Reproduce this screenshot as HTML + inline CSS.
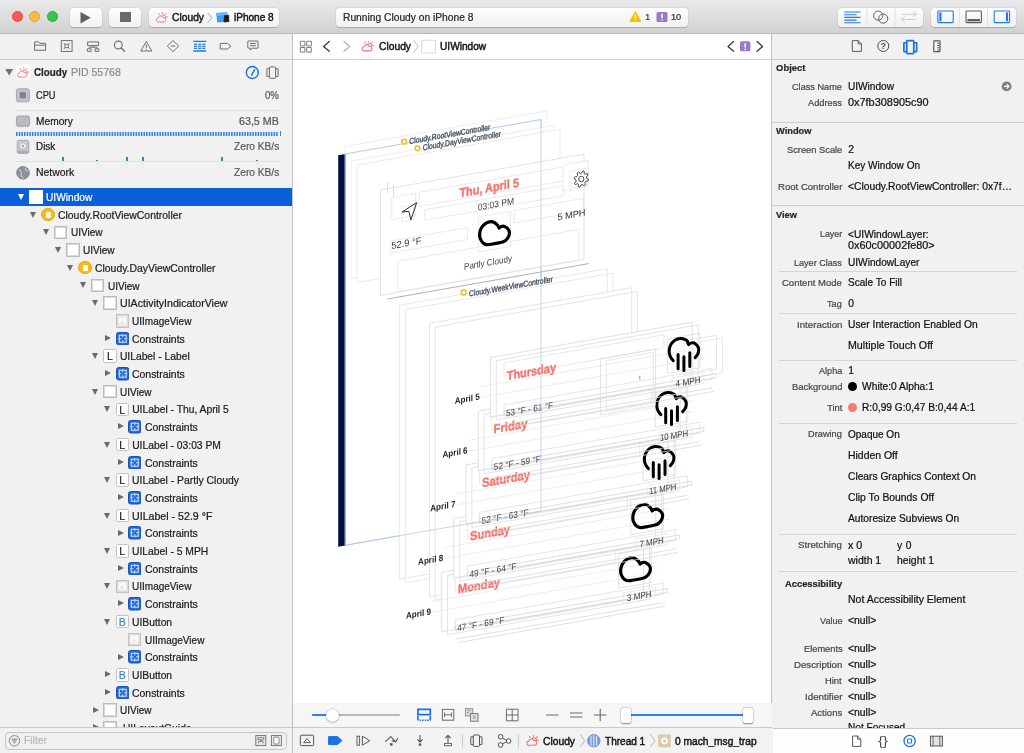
<!DOCTYPE html>
<html lang="en"><head><meta charset="utf-8"><title>Cloudy — Xcode View Debugger</title>
<style>
*{box-sizing:border-box;margin:0;padding:0}
html,body{width:1024px;height:753px;overflow:hidden;background:#fff}
body{font-family:"Liberation Sans",sans-serif;font-size:11.5px;color:#1e1e1e;position:relative;-webkit-font-smoothing:antialiased}
.abs{position:absolute}
#wrap{position:absolute;left:0;top:0;width:1024px;height:753px;will-change:transform}
#toolbar{left:0;top:0;width:1024px;height:34px;background:linear-gradient(#e9e9e9,#d2d2d2);border-bottom:1px solid #b9b9b9}
.tl{position:absolute;top:11.2px;width:11.2px;height:11.2px;border-radius:50%}
.btn{position:absolute;top:7.5px;height:19px;border-radius:4px;background:linear-gradient(#fdfdfd,#f1f1f1);box-shadow:0 0.5px 1px rgba(0,0,0,.2),0 0 0 0.5px rgba(0,0,0,.05)}
.t{position:absolute;white-space:nowrap;line-height:1;-webkit-text-stroke:0.22px currentColor}
#left{left:0;top:34px;width:292px;height:719px;background:#f1f1f1}
#leftborder{left:291.8px;top:34px;width:1.3px;height:719px;background:#c0c0c0}
#center{left:293px;top:34px;width:479px;height:719px;background:#fff}
#right{left:772px;top:34px;width:252px;height:719px;background:#f1f1f1}
#rightborder{left:771.2px;top:34px;width:1.3px;height:719px;background:#c0c0c0}
.hline{position:absolute;height:1px;background:#d4d4d4}
.tri{position:absolute;width:0;height:0}
.ico{position:absolute;width:13.5px;height:13.5px}
</style></head>
<body><div id="wrap">
<div id="left" class="abs"></div><div id="center" class="abs"></div><div id="right" class="abs"></div>
<div id="leftborder" class="abs"></div><div id="rightborder" class="abs"></div>
<div id="toolbar" class="abs">
<div class="tl" style="left:11.5px;background:#fc5b57;border:0.5px solid #df4744"></div>
<div class="tl" style="left:29.1px;background:#fdbc40;border:0.5px solid #dea035"></div>
<div class="tl" style="left:46.7px;background:#34c84a;border:0.5px solid #27aa35"></div>
<div class="btn" style="left:70px;width:32px"><svg class="abs" style="left:10px;top:4px" width="12" height="12" viewBox="0 0 12 12"><path d="M0.5 0 L10.8 5.8 L0.5 11.6Z" fill="#606060"/></svg></div>
<div class="btn" style="left:109px;width:32px"><div class="abs" style="left:11.3px;top:4.5px;width:10.4px;height:10.4px;background:#6a6a6a"></div></div>
<div class="btn" style="left:149.2px;width:129.4px"></div>
<div class="btn" style="left:336px;width:352px"></div>
<div class="btn" style="left:838px;width:85px"></div>
<div class="btn" style="left:931px;width:85px"></div>
<div class="t" style="left:172.1px;top:13px;font-size:10.3px;transform:scaleX(0.9980);transform-origin:0 0;-webkit-text-stroke:0.45px currentColor;color:#161616">Cloudy</div>
<div class="t" style="left:233.6px;top:13px;font-size:10.3px;transform:scaleX(0.9763);transform-origin:0 0;-webkit-text-stroke:0.45px currentColor;color:#161616">iPhone 8</div>
<div class="t" style="left:343.0px;top:13px;font-size:10.3px;transform:scaleX(0.9951);transform-origin:0 0;color:#262626">Running Cloudy on iPhone 8</div>
<div class="t" style="left:645.3px;top:13px;font-size:8.8px;color:#333">1</div>
<div class="t" style="left:671.3px;top:13px;font-size:8.8px;transform:scaleX(1.0420);transform-origin:0 0;color:#333">10</div>
</div>
<div class="hline" style="left:0;top:58.8px;width:292px;height:1.3px;background:#c9c9c9"></div>
<div class="hline" style="left:293px;top:58.8px;width:479px;height:1.3px;background:#cfcfcf"></div>
<div class="hline" style="left:772px;top:58.8px;width:252px;height:1.3px;background:#c9c9c9"></div>
<div class="t" style="left:378.5px;top:42px;font-size:10.3px;transform:scaleX(0.9980);transform-origin:0 0;-webkit-text-stroke:0.45px currentColor;color:#161616">Cloudy</div>
<div class="t" style="left:439.8px;top:42px;font-size:10.3px;transform:scaleX(0.9844);transform-origin:0 0;-webkit-text-stroke:0.45px currentColor;color:#161616">UIWindow</div>
<div class="t" style="left:33.5px;top:68px;font-size:10.3px;transform:scaleX(0.9512);transform-origin:0 0;font-weight:bold;color:#262626">Cloudy</div>
<div class="t" style="left:71.1px;top:68px;font-size:10.3px;transform:scaleX(1.0231);transform-origin:0 0;color:#8c8c8c">PID 55768</div>
<div class="t" style="left:35.9px;top:91px;font-size:10.3px;transform:scaleX(0.8967);transform-origin:0 0;color:#1a1a1a">CPU</div>
<div class="t" style="left:265.1px;top:91px;font-size:10.3px;transform:scaleX(0.9337);transform-origin:0 0;color:#585858">0%</div>
<div class="t" style="left:35.9px;top:117px;font-size:10.3px;transform:scaleX(0.9893);transform-origin:0 0;color:#1a1a1a">Memory</div>
<div class="t" style="left:239.2px;top:117px;font-size:10.3px;transform:scaleX(1.0376);transform-origin:0 0;color:#585858">63,5 MB</div>
<div class="t" style="left:35.9px;top:142px;font-size:10.3px;transform:scaleX(0.9637);transform-origin:0 0;color:#1a1a1a">Disk</div>
<div class="t" style="left:233.7px;top:142px;font-size:10.3px;transform:scaleX(0.9892);transform-origin:0 0;color:#585858">Zero KB/s</div>
<div class="t" style="left:35.9px;top:168px;font-size:10.3px;transform:scaleX(1.0112);transform-origin:0 0;color:#1a1a1a">Network</div>
<div class="t" style="left:233.7px;top:168px;font-size:10.3px;transform:scaleX(0.9892);transform-origin:0 0;color:#585858">Zero KB/s</div>
<div class="hline" style="left:16px;top:110px;width:264px;background:#e1e1e1"></div>
<div class="abs" style="left:279.5px;top:130.5px;width:1.5px;height:5.5px;background:#2b84ee"></div>
<div class="hline" style="left:16px;top:161px;width:264px;background:#e1e1e1"></div>
<div class="abs" style="left:61.5px;top:157px;width:2px;height:4px;background:#2b84ee"></div>
<div class="abs" style="left:96px;top:159.5px;width:2px;height:1.5px;background:#2b84ee"></div>
<div class="abs" style="left:125.5px;top:156.5px;width:2px;height:4.5px;background:#2b84ee"></div>
<div class="abs" style="left:141.5px;top:157px;width:2px;height:4px;background:#2b84ee"></div>
<div class="abs" style="left:220.5px;top:157px;width:2px;height:4px;background:#2b84ee"></div>
<div class="abs" style="left:255.5px;top:159.5px;width:2px;height:1.5px;background:#2b84ee"></div>
<div class="abs" style="left:0;top:188px;width:292px;height:17.6px;background:#0a60d8"></div>
<div class="tri" style="left:17.9px;top:193.9px;border-left:3.7px solid transparent;border-right:3.7px solid transparent;border-top:6.3px solid #fff"></div>
<div class="ico" style="left:29.0px;top:190.1px;background:#fff"></div>
<div class="t" style="left:45.8px;top:193px;font-size:10.3px;transform:scaleX(0.9865);transform-origin:0 0;color:#fff">UIWindow</div>
<div class="tri" style="left:30.2px;top:211.6px;border-left:3.7px solid transparent;border-right:3.7px solid transparent;border-top:6.3px solid #6a6a6a"></div>
<div class="ico" style="left:41.4px;top:207.8px;border-radius:50%;background:#f6bd16;border:0.5px solid #e2a800"><div class="abs" style="left:3.5px;top:3.5px;width:5.6px;height:5.6px;background:#fff;border-radius:1.2px"></div></div>
<div class="t" style="left:58.2px;top:211px;font-size:10.3px;transform:scaleX(1.0105);transform-origin:0 0;color:#1c1c1c">Cloudy.RootViewController</div>
<div class="tri" style="left:42.6px;top:229.3px;border-left:3.7px solid transparent;border-right:3.7px solid transparent;border-top:6.3px solid #6a6a6a"></div>
<div class="ico" style="left:53.7px;top:225.5px;background:#fff;border:1px solid #bcbcbc;box-shadow:inset 0 0 0 1px #dadada"></div>
<div class="t" style="left:70.5px;top:228px;font-size:10.3px;transform:scaleX(0.9741);transform-origin:0 0;color:#1c1c1c">UIView</div>
<div class="tri" style="left:54.9px;top:247.0px;border-left:3.7px solid transparent;border-right:3.7px solid transparent;border-top:6.3px solid #6a6a6a"></div>
<div class="ico" style="left:66.0px;top:243.2px;background:#fff;border:1px solid #bcbcbc;box-shadow:inset 0 0 0 1px #dadada"></div>
<div class="t" style="left:82.8px;top:246px;font-size:10.3px;transform:scaleX(0.9741);transform-origin:0 0;color:#1c1c1c">UIView</div>
<div class="tri" style="left:67.3px;top:264.7px;border-left:3.7px solid transparent;border-right:3.7px solid transparent;border-top:6.3px solid #6a6a6a"></div>
<div class="ico" style="left:78.4px;top:260.9px;border-radius:50%;background:#f6bd16;border:0.5px solid #e2a800"><div class="abs" style="left:3.5px;top:3.5px;width:5.6px;height:5.6px;background:#fff;border-radius:1.2px"></div></div>
<div class="t" style="left:95.2px;top:264px;font-size:10.3px;transform:scaleX(1.0103);transform-origin:0 0;color:#1c1c1c">Cloudy.DayViewController</div>
<div class="tri" style="left:79.7px;top:282.4px;border-left:3.7px solid transparent;border-right:3.7px solid transparent;border-top:6.3px solid #6a6a6a"></div>
<div class="ico" style="left:90.8px;top:278.6px;background:#fff;border:1px solid #bcbcbc;box-shadow:inset 0 0 0 1px #dadada"></div>
<div class="t" style="left:107.5px;top:282px;font-size:10.3px;transform:scaleX(0.9741);transform-origin:0 0;color:#1c1c1c">UIView</div>
<div class="tri" style="left:92.0px;top:300.1px;border-left:3.7px solid transparent;border-right:3.7px solid transparent;border-top:6.3px solid #6a6a6a"></div>
<div class="ico" style="left:103.1px;top:296.3px;background:#fff;border:1px solid #bcbcbc;box-shadow:inset 0 0 0 1px #dadada"></div>
<div class="t" style="left:119.9px;top:299px;font-size:10.3px;transform:scaleX(1.0281);transform-origin:0 0;color:#1c1c1c">UIActivityIndicatorView</div>
<div class="ico" style="left:115.5px;top:314.0px;background:#ececec;border:1px solid #c2c2c2;box-shadow:inset 0 0 0 1px #dcdcdc"><div class="abs" style="left:2.6px;top:2.8px;width:6.6px;height:5.6px;background:#fafafa"></div><div class="abs" style="left:3.4px;top:5.6px;width:0;height:0;border-left:2.4px solid transparent;border-right:2.4px solid transparent;border-bottom:2.6px solid #dcdcdc"></div></div>
<div class="t" style="left:132.2px;top:317px;font-size:10.3px;transform:scaleX(0.9727);transform-origin:0 0;color:#1c1c1c">UIImageView</div>
<div class="tri" style="left:105.2px;top:334.9px;border-top:3.7px solid transparent;border-bottom:3.7px solid transparent;border-left:6.3px solid #6a6a6a"></div>
<svg class="ico" style="left:115.5px;top:331.7px" viewBox="0 0 13.5 13.5"><rect x="0.5" y="0.5" width="12.5" height="12.5" rx="2.2" fill="#2268da" stroke="#1553b8" stroke-width="1"/><rect x="3.3" y="3.3" width="6.9" height="6.9" fill="none" stroke="#cfe0fa" stroke-width="1.1"/><path d="M6.75 2.2V11.3M2.2 6.75H11.3" stroke="#bcd4f8" stroke-width="1"/><rect x="5.5" y="5.5" width="2.5" height="2.5" fill="#2268da"/></svg>
<div class="t" style="left:132.2px;top:335px;font-size:10.3px;transform:scaleX(1.0135);transform-origin:0 0;color:#1c1c1c">Constraints</div>
<div class="tri" style="left:92.0px;top:353.2px;border-left:3.7px solid transparent;border-right:3.7px solid transparent;border-top:6.3px solid #6a6a6a"></div>
<div class="ico" style="left:103.1px;top:349.4px;background:#fff;border:0.6px solid #c2c2c2;border-radius:1.5px;font-size:10.6px;line-height:12.8px;text-align:center;color:#1a1a1a;-webkit-text-stroke:0.15px #1a1a1a">L</div>
<div class="t" style="left:119.9px;top:352px;font-size:10.3px;transform:scaleX(1.0000);transform-origin:0 0;color:#1c1c1c">UILabel - Label</div>
<div class="tri" style="left:105.2px;top:370.3px;border-top:3.7px solid transparent;border-bottom:3.7px solid transparent;border-left:6.3px solid #6a6a6a"></div>
<svg class="ico" style="left:115.5px;top:367.1px" viewBox="0 0 13.5 13.5"><rect x="0.5" y="0.5" width="12.5" height="12.5" rx="2.2" fill="#2268da" stroke="#1553b8" stroke-width="1"/><rect x="3.3" y="3.3" width="6.9" height="6.9" fill="none" stroke="#cfe0fa" stroke-width="1.1"/><path d="M6.75 2.2V11.3M2.2 6.75H11.3" stroke="#bcd4f8" stroke-width="1"/><rect x="5.5" y="5.5" width="2.5" height="2.5" fill="#2268da"/></svg>
<div class="t" style="left:132.2px;top:370px;font-size:10.3px;transform:scaleX(1.0135);transform-origin:0 0;color:#1c1c1c">Constraints</div>
<div class="tri" style="left:92.0px;top:388.6px;border-left:3.7px solid transparent;border-right:3.7px solid transparent;border-top:6.3px solid #6a6a6a"></div>
<div class="ico" style="left:103.1px;top:384.8px;background:#fff;border:1px solid #bcbcbc;box-shadow:inset 0 0 0 1px #dadada"></div>
<div class="t" style="left:119.9px;top:388px;font-size:10.3px;transform:scaleX(0.9741);transform-origin:0 0;color:#1c1c1c">UIView</div>
<div class="tri" style="left:104.4px;top:406.3px;border-left:3.7px solid transparent;border-right:3.7px solid transparent;border-top:6.3px solid #6a6a6a"></div>
<div class="ico" style="left:115.5px;top:402.5px;background:#fff;border:0.6px solid #c2c2c2;border-radius:1.5px;font-size:10.6px;line-height:12.8px;text-align:center;color:#1a1a1a;-webkit-text-stroke:0.15px #1a1a1a">L</div>
<div class="t" style="left:132.2px;top:405px;font-size:10.3px;transform:scaleX(1.0000);transform-origin:0 0;color:#1c1c1c">UILabel - Thu, April 5</div>
<div class="tri" style="left:117.6px;top:423.4px;border-top:3.7px solid transparent;border-bottom:3.7px solid transparent;border-left:6.3px solid #6a6a6a"></div>
<svg class="ico" style="left:127.8px;top:420.2px" viewBox="0 0 13.5 13.5"><rect x="0.5" y="0.5" width="12.5" height="12.5" rx="2.2" fill="#2268da" stroke="#1553b8" stroke-width="1"/><rect x="3.3" y="3.3" width="6.9" height="6.9" fill="none" stroke="#cfe0fa" stroke-width="1.1"/><path d="M6.75 2.2V11.3M2.2 6.75H11.3" stroke="#bcd4f8" stroke-width="1"/><rect x="5.5" y="5.5" width="2.5" height="2.5" fill="#2268da"/></svg>
<div class="t" style="left:144.6px;top:423px;font-size:10.3px;transform:scaleX(1.0135);transform-origin:0 0;color:#1c1c1c">Constraints</div>
<div class="tri" style="left:104.4px;top:441.7px;border-left:3.7px solid transparent;border-right:3.7px solid transparent;border-top:6.3px solid #6a6a6a"></div>
<div class="ico" style="left:115.5px;top:437.9px;background:#fff;border:0.6px solid #c2c2c2;border-radius:1.5px;font-size:10.6px;line-height:12.8px;text-align:center;color:#1a1a1a;-webkit-text-stroke:0.15px #1a1a1a">L</div>
<div class="t" style="left:132.2px;top:441px;font-size:10.3px;transform:scaleX(1.0000);transform-origin:0 0;color:#1c1c1c">UILabel - 03:03 PM</div>
<div class="tri" style="left:117.6px;top:458.8px;border-top:3.7px solid transparent;border-bottom:3.7px solid transparent;border-left:6.3px solid #6a6a6a"></div>
<svg class="ico" style="left:127.8px;top:455.6px" viewBox="0 0 13.5 13.5"><rect x="0.5" y="0.5" width="12.5" height="12.5" rx="2.2" fill="#2268da" stroke="#1553b8" stroke-width="1"/><rect x="3.3" y="3.3" width="6.9" height="6.9" fill="none" stroke="#cfe0fa" stroke-width="1.1"/><path d="M6.75 2.2V11.3M2.2 6.75H11.3" stroke="#bcd4f8" stroke-width="1"/><rect x="5.5" y="5.5" width="2.5" height="2.5" fill="#2268da"/></svg>
<div class="t" style="left:144.6px;top:459px;font-size:10.3px;transform:scaleX(1.0135);transform-origin:0 0;color:#1c1c1c">Constraints</div>
<div class="tri" style="left:104.4px;top:477.1px;border-left:3.7px solid transparent;border-right:3.7px solid transparent;border-top:6.3px solid #6a6a6a"></div>
<div class="ico" style="left:115.5px;top:473.3px;background:#fff;border:0.6px solid #c2c2c2;border-radius:1.5px;font-size:10.6px;line-height:12.8px;text-align:center;color:#1a1a1a;-webkit-text-stroke:0.15px #1a1a1a">L</div>
<div class="t" style="left:132.2px;top:476px;font-size:10.3px;transform:scaleX(1.0103);transform-origin:0 0;color:#1c1c1c">UILabel - Partly Cloudy</div>
<div class="tri" style="left:117.6px;top:494.2px;border-top:3.7px solid transparent;border-bottom:3.7px solid transparent;border-left:6.3px solid #6a6a6a"></div>
<svg class="ico" style="left:127.8px;top:491.0px" viewBox="0 0 13.5 13.5"><rect x="0.5" y="0.5" width="12.5" height="12.5" rx="2.2" fill="#2268da" stroke="#1553b8" stroke-width="1"/><rect x="3.3" y="3.3" width="6.9" height="6.9" fill="none" stroke="#cfe0fa" stroke-width="1.1"/><path d="M6.75 2.2V11.3M2.2 6.75H11.3" stroke="#bcd4f8" stroke-width="1"/><rect x="5.5" y="5.5" width="2.5" height="2.5" fill="#2268da"/></svg>
<div class="t" style="left:144.6px;top:494px;font-size:10.3px;transform:scaleX(1.0135);transform-origin:0 0;color:#1c1c1c">Constraints</div>
<div class="tri" style="left:104.4px;top:512.5px;border-left:3.7px solid transparent;border-right:3.7px solid transparent;border-top:6.3px solid #6a6a6a"></div>
<div class="ico" style="left:115.5px;top:508.7px;background:#fff;border:0.6px solid #c2c2c2;border-radius:1.5px;font-size:10.6px;line-height:12.8px;text-align:center;color:#1a1a1a;-webkit-text-stroke:0.15px #1a1a1a">L</div>
<div class="t" style="left:132.2px;top:512px;font-size:10.3px;transform:scaleX(1.0324);transform-origin:0 0;color:#1c1c1c">UILabel - 52.9 °F</div>
<div class="tri" style="left:117.6px;top:529.6px;border-top:3.7px solid transparent;border-bottom:3.7px solid transparent;border-left:6.3px solid #6a6a6a"></div>
<svg class="ico" style="left:127.8px;top:526.4px" viewBox="0 0 13.5 13.5"><rect x="0.5" y="0.5" width="12.5" height="12.5" rx="2.2" fill="#2268da" stroke="#1553b8" stroke-width="1"/><rect x="3.3" y="3.3" width="6.9" height="6.9" fill="none" stroke="#cfe0fa" stroke-width="1.1"/><path d="M6.75 2.2V11.3M2.2 6.75H11.3" stroke="#bcd4f8" stroke-width="1"/><rect x="5.5" y="5.5" width="2.5" height="2.5" fill="#2268da"/></svg>
<div class="t" style="left:144.6px;top:529px;font-size:10.3px;transform:scaleX(1.0135);transform-origin:0 0;color:#1c1c1c">Constraints</div>
<div class="tri" style="left:104.4px;top:547.9px;border-left:3.7px solid transparent;border-right:3.7px solid transparent;border-top:6.3px solid #6a6a6a"></div>
<div class="ico" style="left:115.5px;top:544.1px;background:#fff;border:0.6px solid #c2c2c2;border-radius:1.5px;font-size:10.6px;line-height:12.8px;text-align:center;color:#1a1a1a;-webkit-text-stroke:0.15px #1a1a1a">L</div>
<div class="t" style="left:132.2px;top:547px;font-size:10.3px;transform:scaleX(1.0022);transform-origin:0 0;color:#1c1c1c">UILabel - 5 MPH</div>
<div class="tri" style="left:117.6px;top:565.0px;border-top:3.7px solid transparent;border-bottom:3.7px solid transparent;border-left:6.3px solid #6a6a6a"></div>
<svg class="ico" style="left:127.8px;top:561.8px" viewBox="0 0 13.5 13.5"><rect x="0.5" y="0.5" width="12.5" height="12.5" rx="2.2" fill="#2268da" stroke="#1553b8" stroke-width="1"/><rect x="3.3" y="3.3" width="6.9" height="6.9" fill="none" stroke="#cfe0fa" stroke-width="1.1"/><path d="M6.75 2.2V11.3M2.2 6.75H11.3" stroke="#bcd4f8" stroke-width="1"/><rect x="5.5" y="5.5" width="2.5" height="2.5" fill="#2268da"/></svg>
<div class="t" style="left:144.6px;top:565px;font-size:10.3px;transform:scaleX(1.0135);transform-origin:0 0;color:#1c1c1c">Constraints</div>
<div class="tri" style="left:104.4px;top:583.3px;border-left:3.7px solid transparent;border-right:3.7px solid transparent;border-top:6.3px solid #6a6a6a"></div>
<div class="ico" style="left:115.5px;top:579.5px;background:#ececec;border:1px solid #c2c2c2;box-shadow:inset 0 0 0 1px #dcdcdc"><div class="abs" style="left:2.6px;top:2.8px;width:6.6px;height:5.6px;background:#fafafa"></div><div class="abs" style="left:3.4px;top:5.6px;width:0;height:0;border-left:2.4px solid transparent;border-right:2.4px solid transparent;border-bottom:2.6px solid #dcdcdc"></div></div>
<div class="t" style="left:132.2px;top:582px;font-size:10.3px;transform:scaleX(0.9727);transform-origin:0 0;color:#1c1c1c">UIImageView</div>
<div class="tri" style="left:117.6px;top:600.4px;border-top:3.7px solid transparent;border-bottom:3.7px solid transparent;border-left:6.3px solid #6a6a6a"></div>
<svg class="ico" style="left:127.8px;top:597.2px" viewBox="0 0 13.5 13.5"><rect x="0.5" y="0.5" width="12.5" height="12.5" rx="2.2" fill="#2268da" stroke="#1553b8" stroke-width="1"/><rect x="3.3" y="3.3" width="6.9" height="6.9" fill="none" stroke="#cfe0fa" stroke-width="1.1"/><path d="M6.75 2.2V11.3M2.2 6.75H11.3" stroke="#bcd4f8" stroke-width="1"/><rect x="5.5" y="5.5" width="2.5" height="2.5" fill="#2268da"/></svg>
<div class="t" style="left:144.6px;top:600px;font-size:10.3px;transform:scaleX(1.0135);transform-origin:0 0;color:#1c1c1c">Constraints</div>
<div class="tri" style="left:104.4px;top:618.7px;border-left:3.7px solid transparent;border-right:3.7px solid transparent;border-top:6.3px solid #6a6a6a"></div>
<div class="ico" style="left:115.5px;top:614.9px;background:#fff;border:0.6px solid #c2c2c2;border-radius:1.5px;font-size:10.6px;line-height:12.8px;text-align:center;color:#2a7de8;-webkit-text-stroke:0.15px #2a7de8">B</div>
<div class="t" style="left:132.2px;top:618px;font-size:10.3px;transform:scaleX(1.0005);transform-origin:0 0;color:#1c1c1c">UIButton</div>
<div class="ico" style="left:127.8px;top:632.6px;background:#ececec;border:1px solid #c2c2c2;box-shadow:inset 0 0 0 1px #dcdcdc"><div class="abs" style="left:2.6px;top:2.8px;width:6.6px;height:5.6px;background:#fafafa"></div><div class="abs" style="left:3.4px;top:5.6px;width:0;height:0;border-left:2.4px solid transparent;border-right:2.4px solid transparent;border-bottom:2.6px solid #dcdcdc"></div></div>
<div class="t" style="left:144.6px;top:636px;font-size:10.3px;transform:scaleX(0.9727);transform-origin:0 0;color:#1c1c1c">UIImageView</div>
<div class="tri" style="left:117.6px;top:653.5px;border-top:3.7px solid transparent;border-bottom:3.7px solid transparent;border-left:6.3px solid #6a6a6a"></div>
<svg class="ico" style="left:127.8px;top:650.3px" viewBox="0 0 13.5 13.5"><rect x="0.5" y="0.5" width="12.5" height="12.5" rx="2.2" fill="#2268da" stroke="#1553b8" stroke-width="1"/><rect x="3.3" y="3.3" width="6.9" height="6.9" fill="none" stroke="#cfe0fa" stroke-width="1.1"/><path d="M6.75 2.2V11.3M2.2 6.75H11.3" stroke="#bcd4f8" stroke-width="1"/><rect x="5.5" y="5.5" width="2.5" height="2.5" fill="#2268da"/></svg>
<div class="t" style="left:144.6px;top:653px;font-size:10.3px;transform:scaleX(1.0135);transform-origin:0 0;color:#1c1c1c">Constraints</div>
<div class="tri" style="left:105.2px;top:671.2px;border-top:3.7px solid transparent;border-bottom:3.7px solid transparent;border-left:6.3px solid #6a6a6a"></div>
<div class="ico" style="left:115.5px;top:668.0px;background:#fff;border:0.6px solid #c2c2c2;border-radius:1.5px;font-size:10.6px;line-height:12.8px;text-align:center;color:#2a7de8;-webkit-text-stroke:0.15px #2a7de8">B</div>
<div class="t" style="left:132.2px;top:671px;font-size:10.3px;transform:scaleX(1.0005);transform-origin:0 0;color:#1c1c1c">UIButton</div>
<div class="tri" style="left:105.2px;top:688.9px;border-top:3.7px solid transparent;border-bottom:3.7px solid transparent;border-left:6.3px solid #6a6a6a"></div>
<svg class="ico" style="left:115.5px;top:685.7px" viewBox="0 0 13.5 13.5"><rect x="0.5" y="0.5" width="12.5" height="12.5" rx="2.2" fill="#2268da" stroke="#1553b8" stroke-width="1"/><rect x="3.3" y="3.3" width="6.9" height="6.9" fill="none" stroke="#cfe0fa" stroke-width="1.1"/><path d="M6.75 2.2V11.3M2.2 6.75H11.3" stroke="#bcd4f8" stroke-width="1"/><rect x="5.5" y="5.5" width="2.5" height="2.5" fill="#2268da"/></svg>
<div class="t" style="left:132.2px;top:689px;font-size:10.3px;transform:scaleX(1.0135);transform-origin:0 0;color:#1c1c1c">Constraints</div>
<div class="tri" style="left:92.9px;top:706.6px;border-top:3.7px solid transparent;border-bottom:3.7px solid transparent;border-left:6.3px solid #6a6a6a"></div>
<div class="ico" style="left:103.1px;top:703.4px;background:#fff;border:1px solid #bcbcbc;box-shadow:inset 0 0 0 1px #dadada"></div>
<div class="t" style="left:119.9px;top:706px;font-size:10.3px;transform:scaleX(0.9741);transform-origin:0 0;color:#1c1c1c">UIView</div>
<div class="tri" style="left:92.9px;top:724.3px;border-top:3.7px solid transparent;border-bottom:3.7px solid transparent;border-left:6.3px solid #6a6a6a"></div>
<div class="ico" style="left:103.1px;top:721.1px;background:#fff;border:1px solid #bcbcbc;box-shadow:inset 0 0 0 1px #dadada"></div>
<div class="t" style="left:122.9px;top:724px;font-size:10.3px;transform:scaleX(1.0000);transform-origin:0 0;color:#1c1c1c">UILayoutGuide</div>
<div class="abs" style="left:0;top:727.2px;width:292px;height:25.8px;background:#f1f1f1;border-top:1px solid #c9c9c9"></div>
<div class="abs" style="left:5px;top:731.6px;width:281.6px;height:18.4px;background:#f0f0f0;border:1px solid #c6c6c6;border-radius:4px"></div>
<div class="t" style="left:24.1px;top:736px;font-size:10.3px;transform:scaleX(1.0048);transform-origin:0 0;color:#b8b8b8">Filter</div>
<div class="abs" style="left:293px;top:703px;width:479px;height:25px;background:#f6f6f6"></div>
<div class="abs" style="left:293px;top:726.6px;width:479px;height:26.4px;background:#f2f2f2;border-top:1px solid #c9c9c9"></div>
<div class="t" style="left:543.2px;top:737px;font-size:10.3px;transform:scaleX(0.9980);transform-origin:0 0;-webkit-text-stroke:0.45px currentColor;color:#161616">Cloudy</div>
<div class="t" style="left:604.8px;top:737px;font-size:10.3px;transform:scaleX(0.9751);transform-origin:0 0;-webkit-text-stroke:0.45px currentColor;color:#161616">Thread 1</div>
<div class="t" style="left:675.3px;top:737px;font-size:10.3px;transform:scaleX(0.9898);transform-origin:0 0;-webkit-text-stroke:0.45px currentColor;color:#161616">0 mach_msg_trap</div>
<div class="abs" style="left:311.5px;top:713.9px;width:88.5px;height:2.2px;background:#b7b7b7;border-radius:1px"></div>
<div class="abs" style="left:311.5px;top:713.9px;width:18px;height:2.2px;background:#2b84ee;border-radius:1px"></div>
<div class="abs" style="left:326px;top:708.5px;width:13px;height:13px;border-radius:50%;background:#fff;box-shadow:0 0.5px 1.5px rgba(0,0,0,.4),0 0 0 0.5px rgba(0,0,0,.12)"></div>
<div class="abs" style="left:626px;top:713.9px;width:120px;height:2.2px;background:#2b84ee"></div>
<div class="abs" style="left:620.5px;top:708px;width:10px;height:14.5px;border-radius:2px;background:#fff;box-shadow:0 0.5px 1.5px rgba(0,0,0,.4),0 0 0 0.5px rgba(0,0,0,.15)"></div>
<div class="abs" style="left:742.5px;top:708px;width:10px;height:14.5px;border-radius:2px;background:#fff;box-shadow:0 0.5px 1.5px rgba(0,0,0,.4),0 0 0 0.5px rgba(0,0,0,.15)"></div>
<div class="t" style="left:776.4px;top:63px;font-size:9.9px;transform:scaleX(0.9608);transform-origin:0 0;font-weight:bold;color:#262626">Object</div>
<div class="t" style="left:792.2px;top:82px;font-size:9.8px;transform:scaleX(0.9350);transform-origin:0 0;color:#464646">Class Name</div>
<div class="t" style="left:848.3px;top:82px;font-size:10.3px;transform:scaleX(0.9801);transform-origin:0 0;color:#111">UIWindow</div>
<div class="t" style="left:808.2px;top:98px;font-size:9.8px;transform:scaleX(0.9429);transform-origin:0 0;color:#464646">Address</div>
<div class="t" style="left:848.3px;top:98px;font-size:10.3px;transform:scaleX(1.0594);transform-origin:0 0;color:#111">0x7fb308905c90</div>
<div class="hline" style="left:772px;top:122px;width:252px;background:#cbcbcb"></div>
<div class="t" style="left:776.4px;top:126px;font-size:9.9px;transform:scaleX(0.9379);transform-origin:0 0;font-weight:bold;color:#262626">Window</div>
<div class="t" style="left:786.8px;top:145px;font-size:9.8px;transform:scaleX(0.9487);transform-origin:0 0;color:#464646">Screen Scale</div>
<div class="t" style="left:848.3px;top:145px;font-size:10.3px;color:#111">2</div>
<div class="t" style="left:848.3px;top:161px;font-size:10.3px;transform:scaleX(0.9764);transform-origin:0 0;color:#111">Key Window On</div>
<div class="t" style="left:777.7px;top:182px;font-size:9.8px;transform:scaleX(0.9771);transform-origin:0 0;color:#464646">Root Controller</div>
<div class="t" style="left:848.3px;top:182px;font-size:10.3px;transform:scaleX(0.9987);transform-origin:0 0;color:#111">&lt;Cloudy.RootViewController: 0x7f…</div>
<div class="hline" style="left:772px;top:205px;width:252px;background:#cbcbcb"></div>
<div class="t" style="left:776.4px;top:210px;font-size:9.9px;transform:scaleX(0.9383);transform-origin:0 0;font-weight:bold;color:#262626">View</div>
<div class="t" style="left:820.0px;top:229px;font-size:9.8px;transform:scaleX(0.9015);transform-origin:0 0;color:#464646">Layer</div>
<div class="t" style="left:848.3px;top:230px;font-size:10.3px;transform:scaleX(0.9893);transform-origin:0 0;color:#111">&lt;UIWindowLayer:</div>
<div class="t" style="left:848.3px;top:241px;font-size:10.3px;transform:scaleX(1.0549);transform-origin:0 0;color:#111">0x60c00002fe80&gt;</div>
<div class="t" style="left:794.2px;top:258px;font-size:9.8px;transform:scaleX(0.9257);transform-origin:0 0;color:#464646">Layer Class</div>
<div class="t" style="left:848.3px;top:258px;font-size:10.3px;transform:scaleX(0.9821);transform-origin:0 0;color:#111">UIWindowLayer</div>
<div class="hline" style="left:779px;top:271px;width:238px;background:#d5d5d5"></div>
<div class="t" style="left:782.3px;top:278px;font-size:9.8px;transform:scaleX(0.9714);transform-origin:0 0;color:#464646">Content Mode</div>
<div class="t" style="left:848.3px;top:278px;font-size:10.3px;transform:scaleX(0.9776);transform-origin:0 0;color:#111">Scale To Fill</div>
<div class="t" style="left:827.4px;top:299px;font-size:9.8px;transform:scaleX(0.9303);transform-origin:0 0;color:#464646">Tag</div>
<div class="t" style="left:848.3px;top:299px;font-size:10.3px;color:#111">0</div>
<div class="hline" style="left:779px;top:313px;width:238px;background:#d5d5d5"></div>
<div class="t" style="left:796.6px;top:320px;font-size:9.8px;transform:scaleX(0.9943);transform-origin:0 0;color:#464646">Interaction</div>
<div class="t" style="left:848.3px;top:320px;font-size:10.3px;transform:scaleX(0.9979);transform-origin:0 0;color:#111">User Interaction Enabled On</div>
<div class="t" style="left:848.3px;top:341px;font-size:10.3px;transform:scaleX(1.0346);transform-origin:0 0;color:#111">Multiple Touch Off</div>
<div class="hline" style="left:779px;top:360px;width:238px;background:#d5d5d5"></div>
<div class="t" style="left:818.8px;top:366px;font-size:9.8px;transform:scaleX(0.9296);transform-origin:0 0;color:#464646">Alpha</div>
<div class="t" style="left:848.3px;top:366px;font-size:10.3px;color:#111">1</div>
<div class="t" style="left:791.7px;top:382px;font-size:9.8px;transform:scaleX(0.9636);transform-origin:0 0;color:#464646">Background</div>
<div class="t" style="left:861.8px;top:382px;font-size:10.3px;transform:scaleX(0.9966);transform-origin:0 0;color:#111">White:0 Alpha:1</div>
<div class="t" style="left:826.6px;top:403px;font-size:9.8px;transform:scaleX(0.9704);transform-origin:0 0;color:#464646">Tint</div>
<div class="t" style="left:861.8px;top:403px;font-size:10.3px;transform:scaleX(0.9884);transform-origin:0 0;color:#111">R:0,99 G:0,47 B:0,44 A:1</div>
<div class="abs" style="left:847.9px;top:382.1px;width:9px;height:9px;border-radius:50%;background:#000"></div>
<div class="abs" style="left:847.9px;top:403px;width:9px;height:9px;border-radius:50%;background:#f77b73"></div>
<div class="hline" style="left:779px;top:423px;width:238px;background:#d5d5d5"></div>
<div class="t" style="left:808.2px;top:429px;font-size:9.8px;transform:scaleX(0.9430);transform-origin:0 0;color:#464646">Drawing</div>
<div class="t" style="left:848.3px;top:430px;font-size:10.3px;transform:scaleX(0.9708);transform-origin:0 0;color:#111">Opaque On</div>
<div class="t" style="left:848.3px;top:451px;font-size:10.3px;transform:scaleX(1.0132);transform-origin:0 0;color:#111">Hidden Off</div>
<div class="t" style="left:848.3px;top:472px;font-size:10.3px;transform:scaleX(0.9938);transform-origin:0 0;color:#111">Clears Graphics Context On</div>
<div class="t" style="left:848.3px;top:493px;font-size:10.3px;transform:scaleX(1.0070);transform-origin:0 0;color:#111">Clip To Bounds Off</div>
<div class="t" style="left:848.3px;top:514px;font-size:10.3px;transform:scaleX(0.9910);transform-origin:0 0;color:#111">Autoresize Subviews On</div>
<div class="hline" style="left:779px;top:533.5px;width:238px;background:#d5d5d5"></div>
<div class="t" style="left:798.3px;top:540px;font-size:9.8px;transform:scaleX(0.9926);transform-origin:0 0;color:#464646">Stretching</div>
<div class="t" style="left:848.3px;top:541px;font-size:10.3px;transform:scaleX(1.0408);transform-origin:0 0;color:#111">x 0</div>
<div class="t" style="left:897.0px;top:541px;font-size:10.3px;letter-spacing:0.353px;color:#111">y 0</div>
<div class="t" style="left:848.3px;top:556px;font-size:10.3px;transform:scaleX(1.0173);transform-origin:0 0;color:#111">width 1</div>
<div class="t" style="left:897.0px;top:556px;font-size:10.3px;transform:scaleX(1.0094);transform-origin:0 0;color:#111">height 1</div>
<div class="hline" style="left:779px;top:571px;width:238px;background:#d5d5d5"></div>
<div class="t" style="left:784.8px;top:579px;font-size:9.9px;transform:scaleX(0.9466);transform-origin:0 0;font-weight:bold;color:#262626">Accessibility</div>
<div class="t" style="left:848.3px;top:595px;font-size:10.3px;transform:scaleX(1.0203);transform-origin:0 0;color:#111">Not Accessibility Element</div>
<div class="t" style="left:819.5px;top:616px;font-size:9.8px;transform:scaleX(0.9286);transform-origin:0 0;color:#464646">Value</div>
<div class="t" style="left:848.3px;top:616px;font-size:10.3px;transform:scaleX(1.0084);transform-origin:0 0;color:#111">&lt;null&gt;</div>
<div class="t" style="left:803.5px;top:644px;font-size:9.8px;transform:scaleX(0.9449);transform-origin:0 0;color:#464646">Elements</div>
<div class="t" style="left:848.3px;top:644px;font-size:10.3px;transform:scaleX(1.0084);transform-origin:0 0;color:#111">&lt;null&gt;</div>
<div class="t" style="left:793.7px;top:660px;font-size:9.8px;transform:scaleX(0.9873);transform-origin:0 0;color:#464646">Description</div>
<div class="t" style="left:848.3px;top:660px;font-size:10.3px;transform:scaleX(1.0084);transform-origin:0 0;color:#111">&lt;null&gt;</div>
<div class="t" style="left:825.4px;top:676px;font-size:9.8px;transform:scaleX(0.9582);transform-origin:0 0;color:#464646">Hint</div>
<div class="t" style="left:848.3px;top:676px;font-size:10.3px;transform:scaleX(1.0084);transform-origin:0 0;color:#111">&lt;null&gt;</div>
<div class="t" style="left:804.7px;top:692px;font-size:9.8px;transform:scaleX(0.9950);transform-origin:0 0;color:#464646">Identifier</div>
<div class="t" style="left:848.3px;top:692px;font-size:10.3px;transform:scaleX(1.0084);transform-origin:0 0;color:#111">&lt;null&gt;</div>
<div class="t" style="left:810.9px;top:708px;font-size:9.8px;transform:scaleX(0.9708);transform-origin:0 0;color:#464646">Actions</div>
<div class="t" style="left:848.3px;top:708px;font-size:10.3px;transform:scaleX(1.0084);transform-origin:0 0;color:#111">&lt;null&gt;</div>
<div class="t" style="left:848.3px;top:723px;font-size:10.3px;transform:scaleX(0.9795);transform-origin:0 0;color:#111">Not Focused</div>
<div class="abs" style="left:772.5px;top:727.5px;width:251.5px;height:25.5px;background:#fdfdfd;border-top:1px solid #c9c9c9"></div>
<svg class="abs" style="left:0;top:0" width="1024" height="753" viewBox="0 0 1024 753" font-family="Liberation Sans, sans-serif">
<g transform="translate(155.8,12.5) scale(1.0)" fill="none" stroke="#f6726d" stroke-width="1" stroke-linecap="round" stroke-linejoin="round"><path d="M2.6 9.5 C1.2 9.5 0.5 8.6 0.5 7.5 C0.5 6.3 1.3 5.5 2.4 5.5 C2.6 4.2 3.6 3.5 4.8 3.5 C5.9 3.5 6.8 4.1 7.2 5.1 C7.6 4.9 8 4.9 8.4 5 C9.4 5.3 10 6.2 9.9 7.3 C9.8 8.6 8.9 9.5 7.6 9.5 Z"/><path d="M5.6 3.2 A2.5 2.5 0 0 1 9.9 5.3"/><path d="M3.6 2 L3.1 1.1 M6.9 1 L6.8 0.2 M9.6 1.9 L10.2 1.1 M10.9 4.5 L11.7 4.4"/></g>
<path d="M208 13.3 L212 17.9 L208 22.5" fill="none" stroke="#9b9b9b" stroke-width="0.9" stroke-linejoin="round" stroke-linecap="round"/>
<path d="M216.2 13 L227.2 12.2 L227.8 21.6 L217.2 22.5 Z" fill="#3e9ef6"/><path d="M216.2 13 L227.2 12.2 L227.4 15 L216.4 16 Z" fill="#69b7fa"/>
<path d="M224.6 15.6 L228.6 15.2 L228.9 21.5 L224 22 Z" fill="#1b1b1b" stroke="#1b1b1b" stroke-width="0.8" stroke-linejoin="round"/>
<path d="M635.4 11.8 L640.6 21.4 L630.2 21.4 Z" fill="#f9bd0f" stroke="#f9bd0f" stroke-width="1.2" stroke-linejoin="round"/><path d="M635.4 14.6V18.4M635.4 19.6V20.6" stroke="#fff" stroke-width="1.2"/>
<rect x="656.5" y="12" width="11" height="10" rx="1.6" fill="#9c79c6"/><path d="M662 13.8V18.3M662 19.4V20.6" stroke="#fff" stroke-width="1.5"/>
<path d="M866.8 7.5V26.5" stroke="#e2e2e2" stroke-width="1"/>
<path d="M895 7.5V26.5" stroke="#e2e2e2" stroke-width="1"/>
<path d="M959.3 7.5V26.5" stroke="#e2e2e2" stroke-width="1"/>
<path d="M987.5 7.5V26.5" stroke="#e2e2e2" stroke-width="1"/>
<path d="M844.3 12H860.5M844.3 14.7H856.5M844.3 17.4H860.5M844.3 20.1H856.5M844.3 22.8H860.5" stroke="#2179f2" stroke-width="1.1"/>
<circle cx="878.2" cy="15.6" r="4.6" fill="none" stroke="#5c5c5c" stroke-width="1"/><circle cx="883.2" cy="18.6" r="4.6" fill="none" stroke="#5c5c5c" stroke-width="1"/>
<path d="M902 14.3H916.5M913 11.3L916.5 14.3L913 17.3 M916 19.5H901.5M905 16.5L901.5 19.5L905 22.5" fill="none" stroke="#cfcfcf" stroke-width="1" stroke-linejoin="round" stroke-linecap="round"/>
<rect x="937.8" y="11" width="15.4" height="11.6" rx="0.8" fill="none" stroke="#2179f2" stroke-width="1.1"/><rect x="939.3" y="12.4" width="2.2" height="8.8" fill="#2179f2"/>
<rect x="966" y="11" width="15.4" height="11.6" rx="0.8" fill="none" stroke="#5e5e5e" stroke-width="1.1"/><rect x="967.4" y="19" width="12.6" height="2.3" fill="#5e5e5e"/>
<rect x="994.2" y="11" width="15.4" height="11.6" rx="0.8" fill="none" stroke="#2179f2" stroke-width="1.1"/><rect x="1005.9" y="12.4" width="2.2" height="8.8" fill="#2179f2"/>
<path d="M34.6 50.3V41.8H38.6L39.8 43.3H45.6V50.3Z M34.6 45.2H45.6" fill="none" stroke="#6f6f6f" stroke-width="1" stroke-linejoin="round"/>
<rect x="61.3" y="40.6" width="10.8" height="10.8" fill="none" stroke="#6f6f6f" stroke-width="1"/><path d="M63.8 43.1L69.6 48.9M69.6 43.1L63.8 48.9" stroke="#6f6f6f" stroke-width="1"/><rect x="65" y="44.3" width="3.4" height="3.4" fill="#f3f3f3" stroke="#6f6f6f" stroke-width="0.9"/>
<path d="M87.6 41.9H98.6V45.6H87.6Z M93.1 45.6V47.2 M89.3 48.8V47.2H96.9V48.8 M87.4 48.8H91.2V51.4H87.4Z M95 48.8H98.8V51.4H95Z" fill="none" stroke="#6f6f6f" stroke-width="1" stroke-linejoin="round"/>
<circle cx="118.3" cy="45" r="3.9" fill="none" stroke="#6f6f6f" stroke-width="1.1"/><path d="M121.2 47.9L124.6 51.2" stroke="#6f6f6f" stroke-width="1.4" stroke-linecap="round"/>
<path d="M146.3 41.4L151.8 51H140.8Z" fill="none" stroke="#6f6f6f" stroke-width="1" stroke-linejoin="round"/><path d="M146.3 44.4V48.2M146.3 49V49.9" stroke="#6f6f6f" stroke-width="1"/>
<path d="M173 40.6L178.7 46.1L173 51.6L167.3 46.1Z" fill="none" stroke="#6f6f6f" stroke-width="1" stroke-linejoin="round"/><path d="M170.8 46.1H175.2" stroke="#6f6f6f" stroke-width="1.1"/>
<path d="M193.2 41.3H206.2M193.2 51H206.2" stroke="#2179f2" stroke-width="1.3"/>
<rect x="194.0" y="43.60" width="3.2" height="1.2" fill="#2179f2"/>
<rect x="198.1" y="43.60" width="3.2" height="1.2" fill="#2179f2"/>
<rect x="202.2" y="43.60" width="3.2" height="1.2" fill="#2179f2"/>
<rect x="194.0" y="45.65" width="3.2" height="1.2" fill="#2179f2"/>
<rect x="198.1" y="45.65" width="3.2" height="1.2" fill="#2179f2"/>
<rect x="202.2" y="45.65" width="3.2" height="1.2" fill="#2179f2"/>
<rect x="194.0" y="47.70" width="3.2" height="1.2" fill="#2179f2"/>
<rect x="198.1" y="47.70" width="3.2" height="1.2" fill="#2179f2"/>
<rect x="202.2" y="47.70" width="3.2" height="1.2" fill="#2179f2"/>
<path d="M220.2 43.4H227.6L231 46.2L227.6 49H220.2Z" fill="none" stroke="#6f6f6f" stroke-width="1" stroke-linejoin="round"/>
<path d="M248.4 41H257.4Q258 41 258 41.6V47.6Q258 48.2 257.4 48.2H252.2L250.4 50.2V48.2H248.4Q247.8 48.2 247.8 47.6V41.6Q247.8 41 248.4 41Z" fill="none" stroke="#6f6f6f" stroke-width="1" stroke-linejoin="round"/><path d="M250 43.5H255.8M250 45.7H255.8" stroke="#6f6f6f" stroke-width="1"/>
<path d="M5.2 69L13.2 69L9.2 75.6Z" fill="#727272"/>
<rect x="16.2" y="64.6" width="14.2" height="14.9" fill="#fff"/>
<g transform="translate(17,67.6) scale(1.0)" fill="none" stroke="#f6726d" stroke-width="1" stroke-linecap="round" stroke-linejoin="round"><path d="M2.6 9.5 C1.2 9.5 0.5 8.6 0.5 7.5 C0.5 6.3 1.3 5.5 2.4 5.5 C2.6 4.2 3.6 3.5 4.8 3.5 C5.9 3.5 6.8 4.1 7.2 5.1 C7.6 4.9 8 4.9 8.4 5 C9.4 5.3 10 6.2 9.9 7.3 C9.8 8.6 8.9 9.5 7.6 9.5 Z"/><path d="M5.6 3.2 A2.5 2.5 0 0 1 9.9 5.3"/><path d="M3.6 2 L3.1 1.1 M6.9 1 L6.8 0.2 M9.6 1.9 L10.2 1.1 M10.9 4.5 L11.7 4.4"/></g>
<circle cx="252.3" cy="72.5" r="6" fill="none" stroke="#1a6fe8" stroke-width="1.4"/><path d="M251.6 75.2L254.6 69.6" stroke="#1a6fe8" stroke-width="1.4" stroke-linecap="round"/>
<g transform="translate(266.3,66.3) scale(1.0)" fill="none" stroke="#6a6a6a" stroke-width="1.0" stroke-linejoin="round"><rect x="3.1" y="0.6" width="6.2" height="11.4" rx="0.8"/><path d="M3.1 2.4H0.9Q0.6 2.4 0.6 2.7V9.9Q0.6 10.2 0.9 10.2H3.1 M9.3 2.4H11.5Q11.8 2.4 11.8 2.7V9.9Q11.8 10.2 11.5 10.2H9.3"/></g>
<path d="M16.80 132V136M19.46 132V136M22.11 132V136M24.77 132V136M27.42 132V136M30.07 132V136M32.73 132V136M35.38 132V136M38.04 132V136M40.70 132V136M43.35 132V136M46.00 132V136M48.66 132V136M51.31 132V136M53.97 132V136M56.62 132V136M59.28 132V136M61.94 132V136M64.59 132V136M67.24 132V136M69.90 132V136M72.55 132V136M75.21 132V136M77.86 132V136M80.52 132V136M83.17 132V136M85.83 132V136M88.48 132V136M91.14 132V136M93.79 132V136M96.45 132V136M99.10 132V136M101.76 132V136M104.41 132V136M107.07 132V136M109.72 132V136M112.38 132V136M115.03 132V136M117.69 132V136M120.34 132V136M123.00 132V136M125.65 132V136M128.31 132V136M130.97 132V136M133.62 132V136M136.28 132V136M138.93 132V136M141.59 132V136M144.24 132V136M146.90 132V136M149.55 132V136M152.21 132V136M154.86 132V136M157.52 132V136M160.17 132V136M162.82 132V136M165.48 132V136M168.13 132V136M170.79 132V136M173.44 132V136M176.10 132V136M178.75 132V136M181.41 132V136M184.06 132V136M186.72 132V136M189.38 132V136M192.03 132V136M194.69 132V136M197.34 132V136M200.00 132V136M202.65 132V136M205.31 132V136M207.96 132V136M210.62 132V136M213.27 132V136M215.92 132V136M218.58 132V136M221.23 132V136M223.89 132V136M226.54 132V136M229.20 132V136M231.85 132V136M234.51 132V136M237.16 132V136M239.82 132V136M242.47 132V136M245.13 132V136M247.78 132V136M250.44 132V136M253.09 132V136M255.75 132V136M258.40 132V136M261.06 132V136M263.71 132V136M266.37 132V136M269.02 132V136M271.68 132V136M274.33 132V136M276.99 132V136" stroke="#2b84ee" stroke-width="1.55"/>
<rect x="16.4" y="88.8" width="13" height="13" rx="2" fill="#bfc2c7" stroke="#9a9da3" stroke-width="0.8"/><rect x="19.9" y="92.3" width="6" height="6" fill="#7d8188"/>
<rect x="16.4" y="116.4" width="13.2" height="9.6" rx="1.5" fill="#b9bcc2" stroke="#94979d" stroke-width="0.8"/><path d="M18 116.2V115.2M20.5 116.2V115.2M23 116.2V115.2M25.5 116.2V115.2M28 116.2V115.2M18 126.2V127.2M20.5 126.2V127.2M23 126.2V127.2M25.5 126.2V127.2M28 126.2V127.2" stroke="#9a9da3" stroke-width="1"/>
<rect x="17.2" y="140.4" width="11.6" height="13" rx="1.6" fill="#c9cbcf" stroke="#9a9da3" stroke-width="0.8"/><ellipse cx="23" cy="146" rx="4" ry="3.4" fill="#e4e5e8" stroke="#a4a7ac" stroke-width="0.7"/><circle cx="23" cy="146" r="0.9" fill="#8d9096"/><rect x="17.6" y="150.6" width="10.8" height="2.4" fill="#a9acb1"/>
<circle cx="23" cy="172.8" r="6.3" fill="#8d929a" stroke="#73777f" stroke-width="0.8"/><path d="M19 169.5C21 170.5 22 172 21 174S22 177 23.5 178M25.5 167.5C24.5 169.5 26.5 171 28.5 171" fill="none" stroke="#c6c9ce" stroke-width="1.1"/>
<path d="M300.3 41.3H304.9V45.9H300.3Z M306.7 41.3H311.3V45.9H306.7Z M300.3 47.5H304.9V52.1H300.3Z M306.7 47.5H311.3V52.1H306.7Z" fill="none" stroke="#7d7d7d" stroke-width="1"/>
<path d="M329.3 41.5L323.6 46.4L329.3 51.3" fill="none" stroke="#3b3b3b" stroke-width="1.3" stroke-linecap="round" stroke-linejoin="round"/>
<path d="M344 41.5L349.7 46.4L344 51.3" fill="none" stroke="#b3b3b3" stroke-width="1.3" stroke-linecap="round" stroke-linejoin="round"/>
<g transform="translate(361.6,41) scale(1.04)" fill="none" stroke="#f6726d" stroke-width="1" stroke-linecap="round" stroke-linejoin="round"><path d="M2.6 9.5 C1.2 9.5 0.5 8.6 0.5 7.5 C0.5 6.3 1.3 5.5 2.4 5.5 C2.6 4.2 3.6 3.5 4.8 3.5 C5.9 3.5 6.8 4.1 7.2 5.1 C7.6 4.9 8 4.9 8.4 5 C9.4 5.3 10 6.2 9.9 7.3 C9.8 8.6 8.9 9.5 7.6 9.5 Z"/><path d="M5.6 3.2 A2.5 2.5 0 0 1 9.9 5.3"/><path d="M3.6 2 L3.1 1.1 M6.9 1 L6.8 0.2 M9.6 1.9 L10.2 1.1 M10.9 4.5 L11.7 4.4"/></g>
<path d="M413.8 40.6 L418.2 46.4 L413.8 52.2" fill="none" stroke="#b4b4b4" stroke-width="0.9" stroke-linejoin="round" stroke-linecap="round"/>
<rect x="421.7" y="40.2" width="13.6" height="12.8" fill="#fff" stroke="#d0d0d0" stroke-width="0.8"/>
<path d="M733.6 41.5L728 46.4L733.6 51.3" fill="none" stroke="#3b3b3b" stroke-width="1.3" stroke-linecap="round" stroke-linejoin="round"/>
<path d="M757 41.5L762.6 46.4L757 51.3" fill="none" stroke="#3b3b3b" stroke-width="1.3" stroke-linecap="round" stroke-linejoin="round"/>
<rect x="740" y="41.3" width="10.4" height="10" rx="1.6" fill="#9c79c6"/><path d="M745.2 43.2V47.6M745.2 48.7V49.9" stroke="#fff" stroke-width="1.5"/>
<path d="M852.3 40.6H858.2L861.4 43.8V51.4H852.3Z M858.2 40.6V43.8H861.4" fill="none" stroke="#5a5a5a" stroke-width="1" stroke-linejoin="round"/>
<circle cx="883.3" cy="46" r="5.5" fill="none" stroke="#4e4e4e" stroke-width="1"/><text x="883.3" y="49.3" font-size="9" font-weight="bold" text-anchor="middle" fill="#4e4e4e">?</text>
<g transform="translate(903.2,40) scale(1.14)" fill="none" stroke="#1a73e8" stroke-width="1.5" stroke-linejoin="round"><rect x="3.1" y="0.6" width="6.2" height="11.4" rx="0.8"/><path d="M3.1 2.4H0.9Q0.6 2.4 0.6 2.7V9.9Q0.6 10.2 0.9 10.2H3.1 M9.3 2.4H11.5Q11.8 2.4 11.8 2.7V9.9Q11.8 10.2 11.5 10.2H9.3"/></g>
<rect x="933.8" y="40.9" width="6.2" height="10.8" rx="0.6" fill="#f6f6f6" stroke="#5a5a5a" stroke-width="1.2"/><path d="M937.2 43.2H939.6M937.2 45.5H939.6M937.2 47.8H939.6M937.2 50.1H939.6" stroke="#5a5a5a" stroke-width="1"/>
<circle cx="1006.6" cy="86.4" r="4.9" fill="#7f7f7f"/><path d="M1003.8 86.4H1008.6M1006.8 84.2L1009 86.4L1006.8 88.6" fill="none" stroke="#fff" stroke-width="1.2" stroke-linejoin="round"/>
<circle cx="14.5" cy="740.8" r="5.2" fill="none" stroke="#7a7a7a" stroke-width="0.9"/><path d="M11.6 739.2H17.4M12.5 741H16.5M13.5 742.8H15.5" stroke="#7a7a7a" stroke-width="1"/>
<rect x="255.8" y="735.6" width="10" height="10" fill="#e9e9e9" stroke="#6e6e6e" stroke-width="0.9"/><path d="M257.8 737.6H263.8V739.8H257.8Z M260.8 739.8V741.4 M258.6 743.4V741.4H263V743.4" fill="none" stroke="#6e6e6e" stroke-width="0.8"/>
<rect x="271.4" y="735.6" width="10" height="10" fill="#e9e9e9" stroke="#6e6e6e" stroke-width="0.9"/><rect x="273.8" y="737.2" width="5.2" height="6.8" rx="0.8" fill="#fff" stroke="#6e6e6e" stroke-width="0.8"/>
<path d="M417.9 714.6V709.4H430.3V714.6Z" fill="none" stroke="#1a6ff0" stroke-width="1.7"/><path d="M417.9 716V720.6M430.3 716V720.6" fill="none" stroke="#1a6ff0" stroke-width="1.6"/><path d="M419.6 720.2H429" fill="none" stroke="#1a6ff0" stroke-width="1.5" stroke-dasharray="1.5 1.1"/>
<rect x="442.4" y="709.4" width="11.4" height="10.8" fill="none" stroke="#6c6c6c" stroke-width="1"/><path d="M444.6 712.4V717.2M451.6 712.4V717.2M444.6 714.8H451.6" stroke="#6c6c6c" stroke-width="1"/>
<rect x="465.4" y="708.6" width="7.4" height="7.4" fill="#dcdcdc" stroke="#8a8a8a" stroke-width="0.9"/><rect x="470.4" y="713.6" width="7.6" height="7.6" fill="#e4e4e4" stroke="#6c6c6c" stroke-width="0.9"/><path d="M467 710.6H471M467 712.6H469M472.6 716H476M472.6 718H476" stroke="#8a8a8a" stroke-width="0.8"/>
<path d="M506.4 709.2H518V720.8H506.4Z M512.2 709.2V720.8M506.4 715H518" fill="none" stroke="#6c6c6c" stroke-width="1"/>
<path d="M546 715H558.4 M570 713H582.4M570 717H582.4 M594 715H606.4M600.2 708.8V721.2" stroke="#6a6a6a" stroke-width="1.1"/>
<rect x="300.4" y="735.2" width="13.2" height="10.4" rx="0.8" fill="none" stroke="#555" stroke-width="1"/><path d="M303.6 742.6L307 738.6L310.4 742.6Z" fill="none" stroke="#555" stroke-width="0.9" stroke-linejoin="round"/>
<path d="M328.6 736.6H337.6L342 740.6L337.6 744.6H328.6Z" fill="#1a73e8" stroke="#1a73e8" stroke-width="1" stroke-linejoin="round"/>
<rect x="357" y="736.2" width="2.6" height="9" fill="none" stroke="#555" stroke-width="0.9"/><path d="M362.4 736.2L369.8 740.7L362.4 745.2Z" fill="none" stroke="#555" stroke-width="1" stroke-linejoin="round"/>
<path d="M385.6 741.4L390.8 736.6L395.4 741.6M397.6 738.6L395.6 742L392.2 740.8" fill="none" stroke="#555" stroke-width="1.1" stroke-linejoin="round" stroke-linecap="round"/><rect x="390" y="743.2" width="2.6" height="2.4" fill="#555"/>
<path d="M420 735V741.6M417.4 739.4L420 742L422.6 739.4" fill="none" stroke="#555" stroke-width="1.1" stroke-linejoin="round"/><rect x="418.8" y="743.4" width="2.4" height="2.4" fill="#555"/>
<path d="M448 742.6V735.6M445.4 738.2L448 735.4L450.6 738.2" fill="none" stroke="#555" stroke-width="1.1" stroke-linejoin="round"/><rect x="444.6" y="743.4" width="6.8" height="2.4" fill="none" stroke="#555" stroke-width="0.9"/>
<path d="M462.5 734.5V747.5M518.4 734.5V747.5" stroke="#c9c9c9" stroke-width="1"/>
<g transform="translate(470.2,734.4) scale(1.0)" fill="none" stroke="#555" stroke-width="1.0" stroke-linejoin="round"><rect x="3.1" y="0.6" width="6.2" height="11.4" rx="0.8"/><path d="M3.1 2.4H0.9Q0.6 2.4 0.6 2.7V9.9Q0.6 10.2 0.9 10.2H3.1 M9.3 2.4H11.5Q11.8 2.4 11.8 2.7V9.9Q11.8 10.2 11.5 10.2H9.3"/></g>
<circle cx="500.6" cy="736.8" r="2.3" fill="none" stroke="#555" stroke-width="1"/><circle cx="500.6" cy="745" r="2.3" fill="none" stroke="#555" stroke-width="1"/><circle cx="508.6" cy="741" r="2.3" fill="none" stroke="#555" stroke-width="1"/><path d="M502.4 738.2L506.4 740M502.4 743.8L506.4 742" stroke="#555" stroke-width="1"/>
<g transform="translate(526.4,735.4) scale(1.04)" fill="none" stroke="#f6726d" stroke-width="1" stroke-linecap="round" stroke-linejoin="round"><path d="M2.6 9.5 C1.2 9.5 0.5 8.6 0.5 7.5 C0.5 6.3 1.3 5.5 2.4 5.5 C2.6 4.2 3.6 3.5 4.8 3.5 C5.9 3.5 6.8 4.1 7.2 5.1 C7.6 4.9 8 4.9 8.4 5 C9.4 5.3 10 6.2 9.9 7.3 C9.8 8.6 8.9 9.5 7.6 9.5 Z"/><path d="M5.6 3.2 A2.5 2.5 0 0 1 9.9 5.3"/><path d="M3.6 2 L3.1 1.1 M6.9 1 L6.8 0.2 M9.6 1.9 L10.2 1.1 M10.9 4.5 L11.7 4.4"/></g>
<path d="M580.4 734.6 L584.8 740.6 L580.4 746.6" fill="none" stroke="#b0b0b0" stroke-width="0.9" stroke-linejoin="round" stroke-linecap="round"/>
<path d="M650.6 734.6 L655.0 740.6 L650.6 746.6" fill="none" stroke="#b0b0b0" stroke-width="0.9" stroke-linejoin="round" stroke-linecap="round"/>
<circle cx="593.8" cy="740.8" r="6.2" fill="#7b9ddb" stroke="#5f84c9" stroke-width="0.8"/><path d="M591 736V745.6M593.8 735V746.6M596.6 736V745.6" stroke="#e8effb" stroke-width="1"/>
<rect x="658.2" y="734.6" width="12.6" height="12.6" rx="1" fill="#dccbaa"/><circle cx="664.5" cy="740.9" r="2.5" fill="none" stroke="#fff" stroke-width="1.6"/>
<path d="M852.6 736H857.6L860.8 739.2V746.4H852.6Z M857.6 736V739.2H860.8" fill="none" stroke="#5a5a5a" stroke-width="1" stroke-linejoin="round"/>
<text x="883" y="745.4" font-size="13" text-anchor="middle" fill="#4a4a4a" textLength="9.6" lengthAdjust="spacingAndGlyphs">{}</text>
<circle cx="909.6" cy="741" r="5.6" fill="none" stroke="#1a73e8" stroke-width="1.3"/><rect x="907.6" y="739" width="4" height="4" rx="0.8" fill="none" stroke="#1a73e8" stroke-width="1.1"/>
<rect x="930.4" y="736.2" width="12" height="9.8" fill="#e4e4e4" stroke="#5a5a5a" stroke-width="1"/><path d="M933 736.2V746M939.8 736.2V746" stroke="#5a5a5a" stroke-width="0.9"/>
</svg>
<svg class="abs" style="left:0;top:0" width="1024" height="753" viewBox="0 0 1024 753" font-family="Liberation Sans, sans-serif">
<polygon points="338.2,155.2 345.4,154 345.4,545.6 338.2,546.8" fill="#06103f"/>
<path d="M345.2 153.5V146.4L547 110.9V119.6" fill="none" stroke="#e8e8e8" stroke-width="0.8"/>
<polygon points="345.0,154.0 541.0,119.5 541.0,510.8 345.0,545.3" fill="none" stroke="#a9c3ee" stroke-width="0.9" />
<polygon points="351.0,161.0 554.0,125.3 554.0,242.8 351.0,278.5" fill="#fff" stroke="#e8e8e8" stroke-width="0.8" />
<polygon points="357.0,165.0 560.0,129.3 560.0,246.8 357.0,282.5" fill="#fff" stroke="#e4e4e4" stroke-width="0.8" />
<polygon points="380.5,190.0 584.0,154.2 584.0,259.5 380.5,295.3" fill="#fff" stroke="#dcdcdc" stroke-width="0.8" />
<path d="M387.5 182V193M393.5 185V197" stroke="#d5d5d5" stroke-width="0.8"/>
<polygon points="391.8,197.5 415.7,193.3 415.7,215.3 391.8,219.5" fill="none" stroke="#e5e5e5" stroke-width="0.8" />
<polygon points="402.0,207.0 414.0,204.9 414.0,219.9 402.0,222.0" fill="none" stroke="#e6e6e6" stroke-width="0.8" />
<polygon points="419.3,192.3 579.0,164.2 579.0,178.2 419.3,206.3" fill="none" stroke="#e5e5e5" stroke-width="0.8" />
<polygon points="424.8,209.8 563.0,185.5 563.0,196.0 424.8,220.3" fill="none" stroke="#e5e5e5" stroke-width="0.8" />
<polygon points="390.8,253.0 467.5,239.5 467.5,227.5 390.8,241.0" fill="none" stroke="#e5e5e5" stroke-width="0.8" />
<polygon points="514.0,223.0 583.5,210.8 583.5,198.3 514.0,210.5" fill="none" stroke="#e5e5e5" stroke-width="0.8" />
<polygon points="478.2,217.0 510.6,211.3 510.6,246.3 478.2,252.0" fill="none" stroke="#e5e5e5" stroke-width="0.8" />
<polygon points="397.7,261.3 579.0,229.4 579.0,259.9 397.7,291.8" fill="none" stroke="#e5e5e5" stroke-width="0.8" />
<polygon points="563.0,165.0 588.0,160.6 588.0,186.6 563.0,191.0" fill="#fff" stroke="#e5e5e5" stroke-width="0.8" />
<polygon points="570.0,171.0 588.0,167.8 588.0,184.8 570.0,188.0" fill="none" stroke="#e8e8e8" stroke-width="0.8" />
<path d="M387.4 299 L588.7 263.6" stroke="#a6a6a6" stroke-width="0.9"/>
<polygon points="399.3,305.3 607.3,268.7 607.3,542.7 399.3,579.3" fill="#fff" stroke="#e2e2e2" stroke-width="0.8" />
<polygon points="405.3,309.7 613.0,273.1 613.0,546.1 405.3,582.7" fill="none" stroke="#e2e2e2" stroke-width="0.8" />
<polygon points="429.6,323.3 631.6,287.7 631.6,561.2 429.6,596.8" fill="#fff" stroke="#dedede" stroke-width="0.8" />
<polygon points="435.2,327.0 637.5,291.4 637.5,564.4 435.2,600.0" fill="none" stroke="#dedede" stroke-width="0.8" />
<polygon points="441.6,572.3 643.5,536.8 643.5,596.3 441.6,631.8" fill="#fff" stroke="#d9d9d9" stroke-width="0.8" />
<polygon points="447.5,575.3 649.5,539.7 649.5,599.2 447.5,634.8" fill="none" stroke="#dcdcdc" stroke-width="0.8" />
<polygon points="455.2,577.8 615.2,549.6 615.2,562.6 455.2,590.8" fill="none" stroke="#e3e3e3" stroke-width="0.8" />
<polygon points="455.2,619.8 663.2,583.2 663.2,594.2 455.2,630.8" fill="none" stroke="#e0e0e0" stroke-width="0.8" />
<polygon points="455.2,625.8 667.2,588.5 667.2,592.5 455.2,629.8" fill="none" stroke="#d6d6d6" stroke-width="0.8" />
<path d="M432.2 601.4L657.2 561.8M432.2 612.2L657.2 572.6" stroke="#e8e8e8" stroke-width="0.8" fill="none"/>
<path d="M455.2 639.3L663.2 602.7M457.2 642.8L665.2 606.2" stroke="#d9d9d9" stroke-width="0.8" fill="none"/>
<polygon points="618.6,553.8 651.2,548.1 651.2,582.6 618.6,588.3" fill="none" stroke="#dadada" stroke-width="0.8" />
<polygon points="623.2,592.8 655.2,587.2 655.2,598.2 623.2,603.8" fill="none" stroke="#e6e6e6" stroke-width="0.8" />
<text transform="matrix(1,-0.176,0,1,458.0,593.5)" font-size="12.6" font-weight="bold" fill="#f9736b" textLength="42.0" lengthAdjust="spacingAndGlyphs"  stroke="#f9736b" stroke-width="0.4">Monday</text>
<text transform="matrix(1,-0.176,0,1,405.9,618.8)" font-size="9" font-weight="bold" fill="#1e1e1e" textLength="25.1" lengthAdjust="spacingAndGlyphs" >April 9</text>
<text transform="matrix(1,-0.176,0,1,457.2,631.3)" font-size="9.3" font-weight="normal" fill="#444" textLength="47.0" lengthAdjust="spacingAndGlyphs" >47 °F - 69 °F</text>
<text transform="matrix(1,-0.176,0,1,627.0,601.2)" font-size="9.2" font-weight="normal" fill="#3c3c3c" textLength="24.6" lengthAdjust="spacingAndGlyphs" >3 MPH</text>
<path d="M640.04 564.08 C640.35 563.86 641.10 563.04 641.90 562.75 C642.69 562.46 643.84 562.13 644.82 562.33 C645.79 562.52 646.93 563.27 647.74 563.92 C648.56 564.57 649.26 565.47 649.71 566.21 C650.15 566.94 650.34 567.49 650.40 568.33 C650.45 569.17 650.35 570.24 650.03 571.25 C649.70 572.27 649.03 573.56 648.43 574.44 C647.83 575.33 647.19 575.97 646.41 576.57 C645.63 577.17 644.91 577.66 643.76 578.06 C642.60 578.45 640.92 578.68 639.50 578.96 C638.09 579.24 636.67 579.49 635.25 579.76 C633.84 580.02 632.29 580.39 631.00 580.55 C629.72 580.71 628.61 580.89 627.55 580.71 C626.49 580.53 625.47 580.09 624.63 579.49 C623.79 578.89 623.10 578.03 622.50 577.10 C621.90 576.17 621.32 574.97 621.01 573.91 C620.70 572.85 620.62 571.87 620.64 570.72 C620.67 569.57 620.77 568.29 621.17 567.00 C621.57 565.72 622.19 564.21 623.03 563.02 C623.87 561.82 625.20 560.63 626.22 559.83 C627.24 559.03 628.17 558.59 629.14 558.24 C630.12 557.88 631.05 557.64 632.07 557.70 C633.08 557.77 634.28 558.12 635.25 558.61 C636.23 559.09 637.25 559.98 637.91 560.63 C638.57 561.27 638.88 561.91 639.24 562.49 C639.59 563.06 639.90 563.82 640.04 564.08 Z" fill="none" stroke="#000" stroke-width="3.2" stroke-linejoin="round"/>
<polygon points="453.8,518.6 655.7,483.1 655.7,542.6 453.8,578.1" fill="#fff" stroke="#d9d9d9" stroke-width="0.8" />
<polygon points="459.7,521.6 661.7,486.0 661.7,545.5 459.7,581.1" fill="none" stroke="#dcdcdc" stroke-width="0.8" />
<polygon points="467.4,524.1 627.4,495.9 627.4,508.9 467.4,537.1" fill="none" stroke="#e3e3e3" stroke-width="0.8" />
<polygon points="467.4,566.1 675.4,529.5 675.4,540.5 467.4,577.1" fill="none" stroke="#e0e0e0" stroke-width="0.8" />
<polygon points="467.4,572.1 679.4,534.8 679.4,538.8 467.4,576.1" fill="none" stroke="#d6d6d6" stroke-width="0.8" />
<path d="M444.4 547.7L669.4 508.1M444.4 558.5L669.4 518.9" stroke="#e8e8e8" stroke-width="0.8" fill="none"/>
<path d="M467.4 585.6L675.4 549.0M469.4 589.1L677.4 552.5" stroke="#d9d9d9" stroke-width="0.8" fill="none"/>
<polygon points="630.8,500.1 663.4,494.4 663.4,528.9 630.8,534.6" fill="none" stroke="#dadada" stroke-width="0.8" />
<polygon points="635.4,539.1 667.4,533.5 667.4,544.5 635.4,550.1" fill="none" stroke="#e6e6e6" stroke-width="0.8" />
<text transform="matrix(1,-0.176,0,1,470.0,540.5)" font-size="12.6" font-weight="bold" fill="#f9736b" textLength="40.0" lengthAdjust="spacingAndGlyphs"  stroke="#f9736b" stroke-width="0.4">Sunday</text>
<text transform="matrix(1,-0.176,0,1,418.1,565.1)" font-size="9" font-weight="bold" fill="#1e1e1e" textLength="25.1" lengthAdjust="spacingAndGlyphs" >April 8</text>
<text transform="matrix(1,-0.176,0,1,469.4,577.6)" font-size="9.3" font-weight="normal" fill="#444" textLength="47.0" lengthAdjust="spacingAndGlyphs" >49 °F - 64 °F</text>
<text transform="matrix(1,-0.176,0,1,639.4,547.5)" font-size="9.2" font-weight="normal" fill="#3c3c3c" textLength="24.4" lengthAdjust="spacingAndGlyphs" >7 MPH</text>
<path d="M652.24 510.88 C652.55 510.66 653.30 509.84 654.10 509.55 C654.89 509.26 656.04 508.93 657.02 509.13 C657.99 509.32 659.13 510.07 659.94 510.72 C660.76 511.37 661.46 512.27 661.91 513.01 C662.35 513.74 662.54 514.29 662.60 515.13 C662.65 515.97 662.55 517.04 662.23 518.05 C661.90 519.07 661.23 520.36 660.63 521.24 C660.03 522.13 659.39 522.77 658.61 523.37 C657.83 523.97 657.11 524.46 655.96 524.86 C654.80 525.25 653.12 525.48 651.70 525.76 C650.29 526.04 648.87 526.29 647.45 526.56 C646.04 526.82 644.49 527.19 643.20 527.35 C641.92 527.51 640.81 527.69 639.75 527.51 C638.69 527.33 637.67 526.89 636.83 526.29 C635.99 525.69 635.30 524.83 634.70 523.90 C634.10 522.97 633.52 521.77 633.21 520.71 C632.90 519.65 632.82 518.67 632.84 517.52 C632.87 516.37 632.97 515.09 633.37 513.80 C633.77 512.52 634.39 511.01 635.23 509.82 C636.07 508.62 637.40 507.43 638.42 506.63 C639.44 505.83 640.37 505.39 641.34 505.04 C642.32 504.68 643.25 504.44 644.27 504.50 C645.28 504.57 646.48 504.92 647.45 505.41 C648.43 505.89 649.45 506.78 650.11 507.43 C650.77 508.07 651.08 508.71 651.44 509.29 C651.79 509.86 652.10 510.62 652.24 510.88 Z" fill="none" stroke="#000" stroke-width="3.2" stroke-linejoin="round"/>
<polygon points="466.0,464.9 667.9,429.4 667.9,488.9 466.0,524.4" fill="#fff" stroke="#d9d9d9" stroke-width="0.8" />
<polygon points="471.9,467.9 673.9,432.3 673.9,491.8 471.9,527.4" fill="none" stroke="#dcdcdc" stroke-width="0.8" />
<polygon points="479.6,470.4 639.6,442.2 639.6,455.2 479.6,483.4" fill="none" stroke="#e3e3e3" stroke-width="0.8" />
<polygon points="479.6,512.4 687.6,475.8 687.6,486.8 479.6,523.4" fill="none" stroke="#e0e0e0" stroke-width="0.8" />
<polygon points="479.6,518.4 691.6,481.1 691.6,485.1 479.6,522.4" fill="none" stroke="#d6d6d6" stroke-width="0.8" />
<path d="M456.6 494.0L681.6 454.4M456.6 504.8L681.6 465.2" stroke="#e8e8e8" stroke-width="0.8" fill="none"/>
<path d="M479.6 531.9L687.6 495.3M481.6 535.4L689.6 498.8" stroke="#d9d9d9" stroke-width="0.8" fill="none"/>
<polygon points="643.0,446.4 675.6,440.7 675.6,475.2 643.0,480.9" fill="none" stroke="#dadada" stroke-width="0.8" />
<polygon points="647.6,485.4 679.6,479.8 679.6,490.8 647.6,496.4" fill="none" stroke="#e6e6e6" stroke-width="0.8" />
<text transform="matrix(1,-0.176,0,1,481.9,487.3)" font-size="12.6" font-weight="bold" fill="#f9736b" textLength="48.1" lengthAdjust="spacingAndGlyphs"  stroke="#f9736b" stroke-width="0.4">Saturday</text>
<text transform="matrix(1,-0.176,0,1,430.3,511.4)" font-size="9" font-weight="bold" fill="#1e1e1e" textLength="25.1" lengthAdjust="spacingAndGlyphs" >April 7</text>
<text transform="matrix(1,-0.176,0,1,481.6,523.9)" font-size="9.3" font-weight="normal" fill="#444" textLength="47.0" lengthAdjust="spacingAndGlyphs" >52 °F - 63 °F</text>
<text transform="matrix(1,-0.176,0,1,649.0,494.5)" font-size="9.2" font-weight="normal" fill="#3c3c3c" textLength="27.4" lengthAdjust="spacingAndGlyphs" >11 MPH</text>
<path d="M648.51 468.68 C648.22 468.35 647.28 467.42 646.78 466.71 C646.27 465.99 645.83 465.20 645.48 464.38 C645.13 463.57 644.85 462.69 644.67 461.81 C644.49 460.93 644.40 460.00 644.40 459.10 C644.40 458.20 644.49 457.27 644.67 456.39 C644.85 455.51 645.13 454.63 645.48 453.82 C645.83 453.00 646.27 452.21 646.78 451.49 C647.28 450.78 647.87 450.10 648.51 449.52 C649.14 448.94 649.85 448.43 650.59 448.01 C651.33 447.60 652.12 447.26 652.92 447.03 C653.72 446.79 654.57 446.65 655.40 446.61 C656.23 446.57 657.08 446.63 657.90 446.79 C658.71 446.95 659.53 447.21 660.30 447.55 C661.07 447.90 662.06 448.32 662.50 448.86 C662.93 449.40 662.68 450.18 662.90 450.80 C663.12 451.42 663.65 452.27 663.80 452.57 M663.79 452.57 C664.13 452.32 665.06 451.40 665.84 451.10 C666.62 450.81 667.54 450.57 668.47 450.81 C669.39 451.06 670.56 451.79 671.39 452.57 C672.22 453.35 673.02 454.56 673.44 455.49 C673.85 456.41 673.95 457.10 673.90 458.12 C673.85 459.14 673.51 460.65 673.14 461.62 C672.77 462.60 672.17 463.28 671.68 463.96 C671.20 464.64 670.47 465.42 670.22 465.72 M653.3 462.5V476.8 M659.1 464.8V478.6 M665.0 460.7V474.5" fill="none" stroke="#000" stroke-width="3" stroke-linecap="round" stroke-linejoin="round"/>
<polygon points="478.2,411.2 680.1,375.7 680.1,435.2 478.2,470.7" fill="#fff" stroke="#d9d9d9" stroke-width="0.8" />
<polygon points="484.1,414.2 686.1,378.6 686.1,438.1 484.1,473.7" fill="none" stroke="#dcdcdc" stroke-width="0.8" />
<polygon points="491.8,416.7 651.8,388.5 651.8,401.5 491.8,429.7" fill="none" stroke="#e3e3e3" stroke-width="0.8" />
<polygon points="491.8,458.7 699.8,422.1 699.8,433.1 491.8,469.7" fill="none" stroke="#e0e0e0" stroke-width="0.8" />
<polygon points="491.8,464.7 703.8,427.4 703.8,431.4 491.8,468.7" fill="none" stroke="#d6d6d6" stroke-width="0.8" />
<path d="M468.8 440.3L693.8 400.7M468.8 451.1L693.8 411.5" stroke="#e8e8e8" stroke-width="0.8" fill="none"/>
<path d="M491.8 478.2L699.8 441.6M493.8 481.7L701.8 445.1" stroke="#d9d9d9" stroke-width="0.8" fill="none"/>
<polygon points="655.2,392.7 687.8,387.0 687.8,421.5 655.2,427.2" fill="none" stroke="#dadada" stroke-width="0.8" />
<polygon points="659.8,431.7 691.8,426.1 691.8,437.1 659.8,442.7" fill="none" stroke="#e6e6e6" stroke-width="0.8" />
<text transform="matrix(1,-0.176,0,1,493.6,433.5)" font-size="12.6" font-weight="bold" fill="#f9736b" textLength="33.8" lengthAdjust="spacingAndGlyphs"  stroke="#f9736b" stroke-width="0.4">Friday</text>
<text transform="matrix(1,-0.176,0,1,442.5,457.7)" font-size="9" font-weight="bold" fill="#1e1e1e" textLength="25.1" lengthAdjust="spacingAndGlyphs" >April 6</text>
<text transform="matrix(1,-0.176,0,1,493.8,470.2)" font-size="9.3" font-weight="normal" fill="#444" textLength="47.0" lengthAdjust="spacingAndGlyphs" >52 °F - 59 °F</text>
<text transform="matrix(1,-0.176,0,1,660.0,441.1)" font-size="9.2" font-weight="normal" fill="#3c3c3c" textLength="28.0" lengthAdjust="spacingAndGlyphs" >10 MPH</text>
<path d="M660.91 414.68 C660.62 414.35 659.68 413.42 659.18 412.71 C658.67 411.99 658.23 411.20 657.88 410.38 C657.53 409.57 657.25 408.69 657.07 407.81 C656.89 406.93 656.80 406.00 656.80 405.10 C656.80 404.20 656.89 403.27 657.07 402.39 C657.25 401.51 657.53 400.63 657.88 399.82 C658.23 399.00 658.67 398.21 659.18 397.49 C659.68 396.78 660.27 396.10 660.91 395.52 C661.54 394.94 662.25 394.43 662.99 394.01 C663.73 393.60 664.52 393.26 665.32 393.03 C666.12 392.79 666.97 392.65 667.80 392.61 C668.63 392.57 669.48 392.63 670.30 392.79 C671.11 392.95 671.93 393.21 672.70 393.55 C673.47 393.90 674.46 394.32 674.90 394.86 C675.33 395.40 675.08 396.18 675.30 396.80 C675.52 397.42 676.05 398.27 676.20 398.57 M676.19 398.57 C676.53 398.32 677.46 397.40 678.24 397.10 C679.02 396.81 679.94 396.57 680.87 396.81 C681.79 397.06 682.96 397.79 683.79 398.57 C684.62 399.35 685.42 400.56 685.84 401.49 C686.25 402.41 686.35 403.10 686.30 404.12 C686.25 405.14 685.91 406.65 685.54 407.62 C685.17 408.60 684.57 409.28 684.08 409.96 C683.60 410.64 682.87 411.42 682.62 411.72 M665.7 408.5V422.8 M671.5 410.8V424.6 M677.4 406.7V420.5" fill="none" stroke="#000" stroke-width="3" stroke-linecap="round" stroke-linejoin="round"/>
<polygon points="490.4,357.5 692.3,322.0 692.3,381.5 490.4,417.0" fill="#fff" stroke="#d9d9d9" stroke-width="0.8" />
<polygon points="496.3,360.5 698.3,324.9 698.3,384.4 496.3,420.0" fill="none" stroke="#dcdcdc" stroke-width="0.8" />
<polygon points="684.0,341.0 716.5,335.3 716.5,369.3 684.0,375.0" fill="none" stroke="#e2e2e2" stroke-width="0.8" />
<polygon points="690.0,343.7 722.5,338.0 722.5,372.6 690.0,378.3" fill="none" stroke="#e4e4e4" stroke-width="0.8" />
<polygon points="504.0,363.0 664.0,334.8 664.0,347.8 504.0,376.0" fill="none" stroke="#e3e3e3" stroke-width="0.8" />
<polygon points="504.0,405.0 712.0,368.4 712.0,379.4 504.0,416.0" fill="none" stroke="#e0e0e0" stroke-width="0.8" />
<polygon points="504.0,411.0 716.0,373.7 716.0,377.7 504.0,415.0" fill="none" stroke="#d6d6d6" stroke-width="0.8" />
<path d="M481.0 386.6L706.0 347.0M481.0 397.4L706.0 357.8" stroke="#e8e8e8" stroke-width="0.8" fill="none"/>
<path d="M504.0 424.5L712.0 387.9M506.0 428.0L714.0 391.4" stroke="#d9d9d9" stroke-width="0.8" fill="none"/>
<polygon points="667.4,339.0 700.0,333.3 700.0,367.8 667.4,373.5" fill="none" stroke="#dadada" stroke-width="0.8" />
<polygon points="672.0,378.0 704.0,372.4 704.0,383.4 672.0,389.0" fill="none" stroke="#e6e6e6" stroke-width="0.8" />
<text transform="matrix(1,-0.176,0,1,506.7,380.2)" font-size="12.6" font-weight="bold" fill="#f9736b" textLength="49.3" lengthAdjust="spacingAndGlyphs"  stroke="#f9736b" stroke-width="0.4">Thursday</text>
<text transform="matrix(1,-0.176,0,1,454.7,404.0)" font-size="9" font-weight="bold" fill="#1e1e1e" textLength="25.1" lengthAdjust="spacingAndGlyphs" >April 5</text>
<text transform="matrix(1,-0.176,0,1,506.0,416.5)" font-size="9.3" font-weight="normal" fill="#444" textLength="47.0" lengthAdjust="spacingAndGlyphs" >53 °F - 61 °F</text>
<text transform="matrix(1,-0.176,0,1,675.5,387.1)" font-size="9.2" font-weight="normal" fill="#3c3c3c" textLength="25.3" lengthAdjust="spacingAndGlyphs" >4 MPH</text>
<path d="M673.31 360.68 C673.02 360.35 672.08 359.42 671.58 358.71 C671.07 357.99 670.63 357.20 670.28 356.38 C669.93 355.57 669.65 354.69 669.47 353.81 C669.29 352.93 669.20 352.00 669.20 351.10 C669.20 350.20 669.29 349.27 669.47 348.39 C669.65 347.51 669.93 346.63 670.28 345.82 C670.63 345.00 671.07 344.21 671.58 343.49 C672.08 342.78 672.67 342.10 673.31 341.52 C673.94 340.94 674.65 340.43 675.39 340.01 C676.13 339.60 676.92 339.26 677.72 339.03 C678.52 338.79 679.37 338.65 680.20 338.61 C681.03 338.57 681.88 338.63 682.70 338.79 C683.51 338.95 684.33 339.21 685.10 339.55 C685.87 339.90 686.86 340.32 687.30 340.86 C687.73 341.40 687.48 342.18 687.70 342.80 C687.92 343.42 688.45 344.27 688.60 344.57 M688.59 344.57 C688.93 344.32 689.86 343.40 690.64 343.10 C691.42 342.81 692.34 342.57 693.27 342.81 C694.19 343.06 695.36 343.79 696.19 344.57 C697.02 345.35 697.82 346.56 698.24 347.49 C698.65 348.41 698.75 349.10 698.70 350.12 C698.65 351.14 698.31 352.65 697.94 353.62 C697.57 354.60 696.97 355.28 696.48 355.96 C696.00 356.64 695.27 357.42 695.02 357.72 M678.1 354.5V368.8 M683.9 356.8V370.6 M689.8 352.7V366.5" fill="none" stroke="#000" stroke-width="3" stroke-linecap="round" stroke-linejoin="round"/>
<polygon points="600.6,358.7 655.4,349.1 655.4,405.4 600.6,415.0" fill="none" stroke="#dcdcdc" stroke-width="0.8" />
<polygon points="606.4,360.5 653.3,352.2 653.3,403.2 606.4,411.5" fill="none" stroke="#e2e2e2" stroke-width="0.8" />
<path d="M639.8 376V379.6" stroke="#777" stroke-width="0.8"/>
<path d="M541 119.2 V511 L345 545.3" fill="none" stroke="#b4caef" stroke-width="0.8"/>
<circle cx="404.2" cy="141.7" r="2.4" fill="#fff" stroke="#f5bd1d" stroke-width="1.5"/><text transform="matrix(1,-0.176,0,1,409.3,144.2)" font-size="8.4" font-weight="normal" fill="#3a4151" textLength="81.0" lengthAdjust="spacingAndGlyphs" stroke="#3a4151" stroke-width="0.25">Cloudy.RootViewController</text>
<circle cx="417.5" cy="148.2" r="2.4" fill="#fff" stroke="#f5bd1d" stroke-width="1.5"/><text transform="matrix(1,-0.176,0,1,422.7,150.4)" font-size="8.4" font-weight="normal" fill="#3a4151" textLength="78.3" lengthAdjust="spacingAndGlyphs" stroke="#3a4151" stroke-width="0.25">Cloudy.DayViewController</text>
<circle cx="463.6" cy="292.5" r="2.4" fill="#fff" stroke="#f5bd1d" stroke-width="1.5"/><text transform="matrix(1,-0.176,0,1,469.0,296.6)" font-size="8.4" font-weight="normal" fill="#3a4151" textLength="83.7" lengthAdjust="spacingAndGlyphs" stroke="#3a4151" stroke-width="0.25">Cloudy.WeekViewController</text>
<text transform="matrix(1,-0.176,0,1,459.4,197.3)" font-size="12.6" font-weight="bold" fill="#f9736b" textLength="59.6" lengthAdjust="spacingAndGlyphs"  stroke="#f9736b" stroke-width="0.4">Thu, April 5</text>
<text transform="matrix(1,-0.176,0,1,477.7,210.5)" font-size="9.2" font-weight="normal" fill="#3c3c3c" textLength="36.3" lengthAdjust="spacingAndGlyphs" >03:03 PM</text>
<text transform="matrix(1,-0.176,0,1,464.0,270.0)" font-size="9.2" font-weight="normal" fill="#444" textLength="48.0" lengthAdjust="spacingAndGlyphs" >Partly Cloudy</text>
<text transform="matrix(1,-0.176,0,1,391.4,249.1)" font-size="9.6" font-weight="normal" fill="#333" textLength="30.0" lengthAdjust="spacingAndGlyphs" >52.9 °F</text>
<text transform="matrix(1,-0.176,0,1,557.4,220.6)" font-size="9.6" font-weight="normal" fill="#333" textLength="28.1" lengthAdjust="spacingAndGlyphs" >5 MPH</text>
<path d="M499.04 227.98 C499.35 227.76 500.10 226.94 500.90 226.65 C501.69 226.36 502.84 226.03 503.82 226.23 C504.79 226.42 505.93 227.17 506.74 227.82 C507.56 228.47 508.26 229.37 508.71 230.11 C509.15 230.84 509.34 231.39 509.40 232.23 C509.45 233.07 509.35 234.14 509.03 235.15 C508.70 236.17 508.03 237.46 507.43 238.34 C506.83 239.23 506.19 239.87 505.41 240.47 C504.63 241.07 503.91 241.56 502.76 241.96 C501.60 242.35 499.92 242.58 498.50 242.86 C497.09 243.14 495.67 243.39 494.25 243.66 C492.84 243.92 491.29 244.29 490.00 244.45 C488.72 244.61 487.61 244.79 486.55 244.61 C485.49 244.43 484.47 243.99 483.63 243.39 C482.79 242.79 482.10 241.93 481.50 241.00 C480.90 240.07 480.32 238.87 480.01 237.81 C479.70 236.75 479.62 235.77 479.64 234.62 C479.67 233.47 479.77 232.19 480.17 230.90 C480.57 229.62 481.19 228.11 482.03 226.92 C482.87 225.72 484.20 224.53 485.22 223.73 C486.24 222.93 487.17 222.49 488.14 222.14 C489.12 221.78 490.05 221.54 491.07 221.60 C492.08 221.67 493.28 222.02 494.25 222.51 C495.23 222.99 496.25 223.88 496.91 224.53 C497.57 225.17 497.88 225.81 498.24 226.39 C498.59 226.96 498.90 227.72 499.04 227.98 Z" fill="none" stroke="#000" stroke-width="3.2" stroke-linejoin="round"/>
<path d="M416.7 202.6 L402.1 212 L408.9 211.4 L410.9 219.8 Z" fill="none" stroke="#2a2a2a" stroke-width="1" stroke-linejoin="round"/>
<polygon points="588.5,179.3 588.1,180.9 585.7,181.4 585.0,182.4 585.4,184.9 584.1,185.9 582.3,184.4 581.3,184.7 579.9,187.1 578.5,186.9 578.4,184.3 577.6,183.7 575.2,184.5 574.5,183.3 576.2,181.0 576.1,179.9 574.1,178.7 574.5,177.1 576.9,176.6 577.6,175.6 577.2,173.1 578.5,172.1 580.3,173.6 581.3,173.3 582.7,170.9 584.1,171.1 584.2,173.7 585.0,174.3 587.4,173.5 588.1,174.7 586.4,177.0 586.5,178.1" fill="none" stroke="#333" stroke-width="0.9" stroke-linejoin="round"/>
<ellipse cx="581.3" cy="179" rx="2.6" ry="2.8" fill="none" stroke="#333" stroke-width="0.9"/>
</svg>
</div></body></html>
